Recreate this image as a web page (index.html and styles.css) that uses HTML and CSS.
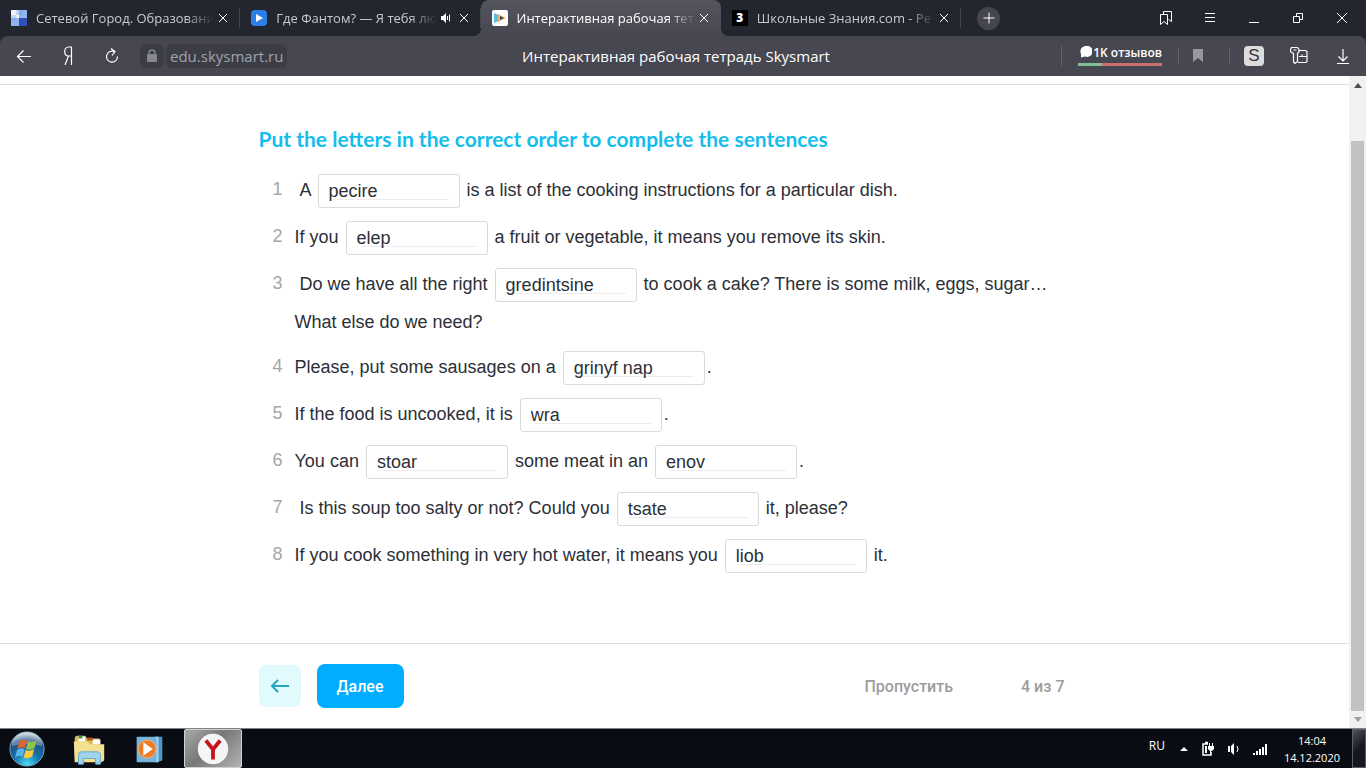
FILE: index.html
```html
<!DOCTYPE html>
<html lang="ru">
<head>
	<meta charset="UTF-8">
	<meta name="viewport" content="width=device-width, initial-scale=1.0">
	<title>Интерактивная рабочая тетрадь Skysmart</title>
	<link rel="stylesheet" href="styles.css">
</head>

<body>

	<!-- Tab strip -->
	<header class="tab-strip">
		<nav class="tabs">
			<div class="tab">
				<svg class="favicon" viewBox="0 0 16 16"><path fill="#eef3fb" d="M0 0h8v8H0z"/><path fill="#8fb4ee" d="M8 0h8v8H8zM0 8h8v8H0z"/><path fill="#2f50b4" d="M8 8h8v8H8z"/><path fill="#6e9df0" d="M5 0h6v5H5zM0 5h5v6H0z" opacity=".35"/></svg>
				<a class="tab-title" href="#">Сетевой Город. Образовани</a>
				<button class="tab-close" aria-label="Закрыть"><svg viewBox="0 0 10 10"><path d="M1 1l8 8M9 1l-8 8"/></svg></button>
			</div>
			<div class="tab">
				<svg class="favicon" viewBox="0 0 16 16"><rect width="16" height="16" rx="4" fill="#2a80e8"/><path fill="#fff" d="M5 4l7 4-7 4z"/></svg>
				<a class="tab-title" href="#">Где Фантом? — Я тебя лю</a>
				<svg class="sound" viewBox="0 0 10 10"><path fill="#fff" d="M0 3h2l3-3v10L2 7H0z"/><path fill="none" stroke="#fff" d="M6.500 3v4M8.500 1.500v7"/></svg>
				<button class="tab-close" aria-label="Закрыть"><svg viewBox="0 0 10 10"><path d="M1 1l8 8M9 1l-8 8"/></svg></button>
			</div>
			<div class="tab tab-active">
				<svg class="favicon" viewBox="0 0 16 16"><rect width="16" height="16" rx="2" fill="#fff"/><path fill="#54bfe8" d="M2 3l7 3-2 5-5 2z"/><path fill="#f4b266" d="M6 4l8 4-8 4z"/><path fill="#35455c" d="M8 6l4 2-4 2z"/></svg>
				<a class="tab-title" href="#">Интерактивная рабочая тет</a>
				<button class="tab-close" aria-label="Закрыть"><svg viewBox="0 0 10 10"><path d="M1 1l8 8M9 1l-8 8"/></svg></button>
			</div>
			<div class="tab">
				<span class="favicon favicon-z">3</span>
				<a class="tab-title" href="#">Школьные Знания.com - Ре</a>
				<button class="tab-close" aria-label="Закрыть"><svg viewBox="0 0 10 10"><path d="M1 1l8 8M9 1l-8 8"/></svg></button>
			</div>
		</nav>
		<button class="new-tab" aria-label="Новая вкладка"><svg viewBox="0 0 12 12"><path d="M6 0.500v11M0.500 6h11"/></svg></button>
		<div class="window-controls">
			<button aria-label="Закладки"><svg viewBox="0 0 16 16"><path d="M2.500 4.500h7v10L6 11.500l-3.500 3zM5.500 4.500v-3h8v10l-3-2"/></svg></button>
			<button aria-label="Меню"><svg viewBox="0 0 16 16"><path d="M3 3.500h10M3 7.500h10M3 11.500h10"/></svg></button>
			<button aria-label="Свернуть"><svg viewBox="0 0 16 16"><path d="M3 12.500h10"/></svg></button>
			<button aria-label="Окно"><svg viewBox="0 0 16 16"><path d="M3.500 6.500h6v6h-6zM6.500 6.500v-3h6v6h-3"/></svg></button>
			<button aria-label="Закрыть окно"><svg viewBox="0 0 16 16"><path d="M3 3l10 10M13 3L3 13"/></svg></button>
		</div>
	</header>

	<!-- Address bar -->
	<div class="toolbar">
		<div class="toolbar-side">
			<button class="tool" aria-label="Назад"><svg viewBox="0 0 16 16"><path d="M15 8.500H1.500M7.500 2.500l-6 6 6 6"/></svg></button>
			<button class="tool" aria-label="Яндекс"><svg viewBox="0 0 16 20"><path d="M11.500 19V1H8.500C3.500 1 3.500 10 8.500 10h3M8.500 10L5 19"/></svg></button>
			<button class="tool" aria-label="Обновить"><svg viewBox="0 0 16 16"><path d="M13.500 8.500A5.500 5.500 0 1 1 10 3.500M7 .5l4 3-3 4"/></svg></button>
			<button class="lock" aria-label="Защищено"><svg viewBox="0 0 12 14"><rect x="1" y="5" width="10" height="8" rx="1" fill="#85868f"/><path fill="none" stroke="#85868f" stroke-width="1.500" d="M3 6V4a3 3 0 0 1 6 0v2"/></svg></button>
			<a class="address" href="#">edu.skysmart.ru</a>
		</div>
		<div class="page-name">Интерактивная рабочая тетрадь Skysmart</div>
		<div class="toolbar-side toolbar-right">
			<div class="reviews-cell">
				<a class="reviews" href="#">
					<svg viewBox="0 0 12 12"><path fill="#fff" d="M6 0a5.500 5.500 0 1 1-1 10.500L1 11.500V8A5.500 5.500 0 0 1 6 0z"/></svg>1K отзывов
				</a>
			</div>
			<button class="mark" aria-label="В закладки"><svg viewBox="0 0 10 14"><path fill="#96979f" d="M0 0h10v13L5 9l-5 4z"/></svg></button>
			<button class="ext-s" aria-label="Skysmart">S</button>
			<button class="tool" aria-label="Пароли"><svg viewBox="0 0 18 18"><path d="M1.500 .5h6l1.500 2v2L7.500 6.500v8L5 16.500l-1.500-1.500V6.500L.5 4.500v-2zM3.500 3h3M9.500 4.500V3.500h6l1.500 1v10l-1 1H8M9 9.500h8M12 7.500v2"/></svg></button>
			<button class="tool" aria-label="Загрузки"><svg viewBox="0 0 18 18"><path d="M9 2v12M4.500 9.500L9 14l4.500-4.500M3 16.500h12"/></svg></button>
		</div>
	</div>

	<!-- Page -->
	<div class="viewport">
		<main class="page">
			<section class="exercise">
				<div class="column">
					<h1>Put the letters in the correct order to complete the sentences</h1>
					<ol class="sentences">
						<li>&nbsp;A <input type="text" aria-label="1" value="pecire"> is a list of the cooking instructions for a particular dish.</li>
						<li>If you <input type="text" aria-label="2" value="elep"> a fruit or vegetable, it means you remove its skin.</li>
						<li>&nbsp;Do we have all the right <input type="text" aria-label="3" value="gredintsine"> to cook a cake? There is some milk, eggs, sugar… What else do we need?</li>
						<li>Please, put some sausages on a <input type="text" aria-label="4" value="grinyf nap">.</li>
						<li>If the food is uncooked, it is <input type="text" aria-label="5" value="wra">.</li>
						<li>You can <input type="text" aria-label="6a" value="stoar"> some meat in an <input type="text" aria-label="6b" value="enov">.</li>
						<li>&nbsp;Is this soup too salty or not? Could you <input type="text" aria-label="7" value="tsate"> it, please?</li>
						<li>If you cook something in very hot water, it means you <input type="text" aria-label="8" value="liob"> it.</li>
					</ol>
				</div>
			</section>
			<footer class="controls">
				<div class="column controls-row">
					<button class="prev" aria-label="Назад"><svg viewBox="0 0 20 16"><path d="M19 8H2M8 2L2 8l6 6"/></svg></button>
					<button class="next">Далее</button>
					<button class="skip">Пропустить</button>
					<span class="progress">4 из 7</span>
				</div>
			</footer>
		</main>
		<div class="scrollbar">
			<svg class="arrow" viewBox="0 0 8 5"><path fill="#505050" d="M0 5l4-5 4 5z"/></svg>
			<div class="thumb"></div>
			<svg class="arrow" viewBox="0 0 8 5"><path fill="#a0a0a0" d="M0 0l4 5 4-5z"/></svg>
		</div>
	</div>

	<!-- Taskbar -->
	<div class="taskbar">
		<button class="task start" aria-label="Пуск">
			<svg viewBox="0 0 40 40">
				<defs>
					<radialGradient id="orb" cx=".5" cy=".95" r=".9"><stop offset="0" stop-color="#4fe0f5"/><stop offset=".4" stop-color="#1478b4"/><stop offset=".8" stop-color="#1f4f80"/><stop offset="1" stop-color="#b9ccd8"/></radialGradient>
				</defs>
				<circle cx="20" cy="20" r="18" fill="url(#orb)" stroke="#7fa3b8"/>
				<path fill="#fff" opacity=".3" d="M4 17a16 15 0 0 1 32 0q-16-5-32 0z"/>
				<path fill="#e8632c" d="M12 12q4-3 8-1l-2 8q-4-2-8 1z"/>
				<path fill="#8fc648" d="M21 12q4 2 9-1l-2 8q-5 3-9 1z"/>
				<path fill="#59b4ec" d="M9.500 21q4-3 8-1l-2 8q-4-2-8 1z"/>
				<path fill="#fbc93c" d="M18.500 21q4 2 9-1l-2 8q-5 3-9 1z"/>
			</svg>
		</button>
		<button class="task" aria-label="Проводник">
			<svg viewBox="0 0 40 40">
				<path fill="#e0bc58" d="M5 9q0-3 3-3h8l2 3h13v23H5z"/>
				<path fill="#fff" d="M9 7h7v5H9zM24 10h8v5h-8z"/><path fill="#3c9a46" d="M9 6h4v3H9z"/><path fill="#b8512b" d="M18 8h6v3h-6z"/>
				<path fill="#f3e193" d="M4 12h14l3 3h15v17l-3 2H5z"/>
				<path fill="#9fd5ef" stroke="#63a9cf" d="M9 36V26q0-3 3-3h17q3 0 3 3v10h-5v-6H14v6z"/>
			</svg>
		</button>
		<button class="task" aria-label="Проигрыватель">
			<svg viewBox="0 0 40 40">
				<path fill="#4f96c6" d="M28 7h6v25l-6 2z"/><path fill="#a8d4ee" d="M26 7h4v27h-4z"/>
				<rect x="7" y="7" width="21" height="27" rx="1" fill="#73b5dd"/>
				<circle cx="18" cy="20" r="9.500" fill="#ec7c26" stroke="#f7b376"/><path fill="#fff" d="M14 13l10 7-10 7z"/>
			</svg>
		</button>
		<button class="task task-active" aria-label="Браузер">
			<svg viewBox="0 0 40 40">
				<circle cx="20" cy="20" r="16" fill="#f5f5f5"/><path fill="none" stroke="#c4161c" stroke-width="4" d="M12.500 11l7.500 9.500L27.500 11M20 19.500V31"/>
			</svg>
		</button>
		<div class="tray">
			<span class="lang">RU</span>
			<svg class="tray-up" viewBox="0 0 8 4"><path fill="#fff" d="M0 4l4-4 4 4z"/></svg>
			<svg class="tray-icon" viewBox="0 0 16 16"><path fill="none" stroke="#fff" stroke-width="1.500" d="M8 3H3v11h8v-3M5 1.500h3"/><path fill="#fff" d="M5 5h2v7H5zM8 5h6v3l-2 2h-1v3h-1v-3L8 8zM9 2h1v3H9zM12 2h1v3h-1z"/></svg>
			<svg class="tray-icon" viewBox="0 0 16 16"><path fill="#fff" d="M2 5h2v6H2zM5 5l3-3v12l-3-3z"/><path fill="none" stroke="#fff" d="M11 5q2 3 0 6"/></svg>
			<svg class="tray-icon" viewBox="0 0 16 16"><path fill="#fff" d="M1 12h2v2H1zM4 10h2v4H4zM7 8h2v6H7zM10 6h2v8h-2zM13 3h2v11h-2z"/></svg>
			<div class="clock"><span>14:04</span><span>14.12.2020</span></div>
			<button class="show-desktop" aria-label="Рабочий стол"></button>
		</div>
	</div>

</body>
</html>
```
FILE: styles.css
```css
/* Global styles */
* {
	box-sizing: border-box;
}

body {
	margin: 0;
	height: 100vh;
	display: flex;
	flex-direction: column;
	overflow: hidden;
	font-family: "Open Sans", "Noto Sans", sans-serif;
	background: #24262f;
}

button {
	border: 0;
	padding: 0;
	background: none;
	color: inherit;
	font: inherit;
}

a {
	color: inherit;
	text-decoration: none;
}

svg {
	display: block;
}

/* Tab strip */
.tab-strip {
	flex: none;
	height: 36px;
	display: flex;
	align-items: center;
	color: #c8c9cd;
}

.tabs {
	display: flex;
	height: 100%;
	flex: 0 1 961px;
	min-width: 0;
}

.tab {
	position: relative;
	flex: 1 1 0;
	min-width: 0;
	display: flex;
	align-items: center;
	padding: 0 8px 0 11px;
	font-size: 13px;
	font-weight: 500;
}

.tab::after {
	content: "";
	position: absolute;
	right: 0;
	top: 8px;
	width: 1px;
	height: 20px;
	background: #44464f;
}

.tab-active {
	background: linear-gradient(#55555f, #474751);
	border-radius: 8px 8px 0 0;
	color: #fff;
}

/* Rounded feet of the active tab */
.tab-active::before,
.tab-active::after {
	content: "";
	position: absolute;
	top: auto;
	bottom: 0;
	width: 8px;
	height: 8px;
}

.tab-active::before {
	left: -8px;
	background: radial-gradient(circle at 0 0, #24262f 8px, #474751 8px);
}

.tab-active::after {
	right: -8px;
	background: radial-gradient(circle at 100% 0, #24262f 8px, #474751 8px);
}

.favicon {
	flex: none;
	width: 16px;
	height: 16px;
	margin-right: 9px;
}

.favicon-z {
	background: #000;
	color: #fff;
	font-size: 12px;
	font-weight: 800;
	line-height: 16px;
	text-align: center;
}

.tab-title {
	flex: 1;
	min-width: 0;
	overflow: hidden;
	white-space: nowrap;
	-webkit-mask-image: linear-gradient(to left, transparent, #000 28px);
	mask-image: linear-gradient(to left, transparent, #000 28px);
}

.sound {
	flex: none;
	width: 10px;
	height: 10px;
	margin: 0 4px;
}

.tab-close {
	flex: none;
	padding: 4px;
}

.tab-close svg {
	width: 10px;
	height: 10px;
	stroke: #fff;
}

.new-tab {
	flex: none;
	width: 23px;
	height: 23px;
	margin-left: 16px;
	display: flex;
	align-items: center;
	justify-content: center;
	border-radius: 50%;
	background: #44454f;
}

.new-tab svg {
	width: 12px;
	height: 12px;
	stroke: #fff;
}

.window-controls {
	margin-left: auto;
	display: flex;
	gap: 28px;
	padding-right: 16px;
}

.window-controls svg {
	width: 16px;
	height: 16px;
	fill: none;
	stroke: #fff;
}

/* Address bar */
.toolbar {
	flex: none;
	height: 40px;
	display: flex;
	align-items: center;
	border-radius: 8px 8px 0 0;
	background: #474751;
	color: #fff;
}

.toolbar-side {
	flex: 1 1 0;
	display: flex;
	align-items: center;
}

.toolbar-side:first-child {
	padding-left: 16px;
}

.tool {
	margin-right: 28px;
}

.tool svg {
	width: 16px;
	height: 20px;
	fill: none;
	stroke: #fff;
	stroke-width: 1.2;
}

.lock,
.address {
	height: 24px;
	border-radius: 6px;
	background: #3b3c46;
}

.lock {
	padding: 0 6px;
	margin: 0 2px 0 -8px;
}

.lock svg {
	width: 12px;
	height: 14px;
}

.address {
	padding: 0 4px;
	font-size: 15px;
	line-height: 24px;
	color: #a2a3aa;
}

.page-name {
	margin-right: 24px;
	font-size: 15px;
}

.toolbar-right {
	justify-content: flex-end;
	padding-right: 6px;
}

.toolbar-right .tool {
	margin: 0 8px 0 18px;
}

.toolbar-right .tool svg {
	width: 18px;
	height: 18px;
}

.reviews-cell {
	height: 20px;
	padding: 0 16px;
	border-left: 1px solid #62626c;
}

.reviews {
	display: flex;
	align-items: center;
	gap: 1px;
	height: 20px;
	padding: 0 0 8px 2px;
	font-size: 12px;
	font-weight: 600;
	white-space: nowrap;
	background: linear-gradient(to right, #7fc195 28%, #ca6f69 28%) 0 100% / 100% 3px no-repeat;
}

.reviews svg {
	width: 12px;
	height: 12px;
}

.mark,
.ext-s {
	flex: none;
}

.mark {
	height: 16px;
	padding: 0 26px 0 14px;
	border: solid #62626c;
	border-width: 0 1px;
}

.mark svg {
	width: 10px;
	height: 14px;
}

.ext-s {
	width: 20px;
	height: 20px;
	margin: 0 8px 0 14px;
	border-radius: 4px;
	background: #dcdcdc;
	color: #33343b;
	font-family: "Liberation Sans", Arial, sans-serif;
	font-size: 17px;
	line-height: 20px;
}

/* Page */
.viewport {
	flex: 1;
	min-height: 0;
	display: flex;
	background: #fff;
}

.page {
	flex: 1;
	min-width: 0;
	display: flex;
	flex-direction: column;
	padding-top: 8px;
}

.column {
	width: 100%;
	max-width: 832px;
	margin: 0 auto;
}

.exercise {
	flex: 1;
	border-top: 1px solid #dcdcdc;
}

.exercise h1 {
	margin: 40px 0 18px;
	font-family: Lato, sans-serif;
	font-size: 21px;
	line-height: 28px;
	font-weight: 700;
	color: #14bdec;
}

.sentences {
	margin: 0;
	padding: 0;
	list-style: none;
	counter-reset: sentence;
	font-family: "Liberation Sans", Arial, sans-serif;
	font-size: 18px;
	line-height: 36px;
	color: #2c3038;
}

.sentences li {
	position: relative;
	padding: 0 32px 0 36px;
	margin-bottom: 8px;
	counter-increment: sentence;
}

.sentences li::before {
	content: counter(sentence);
	position: absolute;
	left: 14px;
	color: #a6a6a6;
}

.sentences input {
	width: 142px;
	height: 34px;
	margin: 3px 2px 2px;
	padding: 0 10px;
	border: 1px solid #dadada;
	border-radius: 3px;
	background: linear-gradient(#ececec, #ececec) 14px 24px / 116px 1px no-repeat;
	vertical-align: -1px;
	font: inherit;
	line-height: 32px;
	color: inherit;
}

/* Bottom controls */
.controls {
	flex: none;
	border-top: 1px solid #dcdcdc;
	padding: 20px 0;
}

.controls-row {
	display: flex;
	align-items: center;
	padding-right: 26px;
	font-family: Roboto, sans-serif;
	font-size: 16px;
	font-weight: 500;
	color: #9d9d9d;
}

.prev {
	width: 42px;
	height: 42px;
	padding: 0 11px;
	border-radius: 8px;
	background: #e0fafe;
}

.prev svg {
	width: 20px;
	height: 16px;
	fill: none;
	stroke: #25a5bf;
	stroke-width: 2;
}

.next {
	width: 87px;
	height: 44px;
	margin-left: 16px;
	border-radius: 8px;
	background: #00adff;
	color: #fff;
}

.skip {
	margin-left: auto;
}

.progress {
	margin-left: 68px;
}

/* Scrollbar */
.scrollbar {
	flex: none;
	width: 17px;
	display: flex;
	flex-direction: column;
	align-items: center;
	padding: 7px 0 6px;
	background: #f1f1f1;
}

.arrow {
	flex: none;
	width: 8px;
	height: 5px;
}

.thumb {
	flex: 1;
	width: 13px;
	margin: 53px 0 6px;
	background: #c1c1c1;
}

/* Taskbar */
.taskbar {
	flex: none;
	height: 40px;
	display: flex;
	align-items: stretch;
	border-top: 1px solid #7d8388;
	background: #090d13;
	color: #fff;
}

.task {
	width: 60px;
	display: flex;
	align-items: center;
	justify-content: center;
}

.task svg {
	width: 38px;
	height: 38px;
}

.start {
	width: 54px;
	margin-right: 5px;
}

.task-active {
	width: 58px;
	margin-left: 5px;
	border: 1px solid #cfd2d4;
	border-radius: 2px;
	background: linear-gradient(135deg, #aaa, #777 45%, #b4b4b4);
}

.tray {
	margin-left: auto;
	display: flex;
	align-items: center;
	font-size: 12px;
}

.lang {
	padding-bottom: 6px;
	margin-right: 15px;
}

.tray-up {
	width: 8px;
	height: 4px;
	margin-right: 12px;
}

.tray-icon {
	width: 16px;
	height: 16px;
	margin-right: 10px;
}

.clock {
	display: flex;
	flex-direction: column;
	align-items: center;
	margin: 0 12px 0 6px;
	font-size: 11px;
	line-height: 17px;
}

.show-desktop {
	align-self: stretch;
	width: 14px;
	border: 1px solid #5c6065;
	background: linear-gradient(135deg, #50555a, #15181c 50%);
}
```
